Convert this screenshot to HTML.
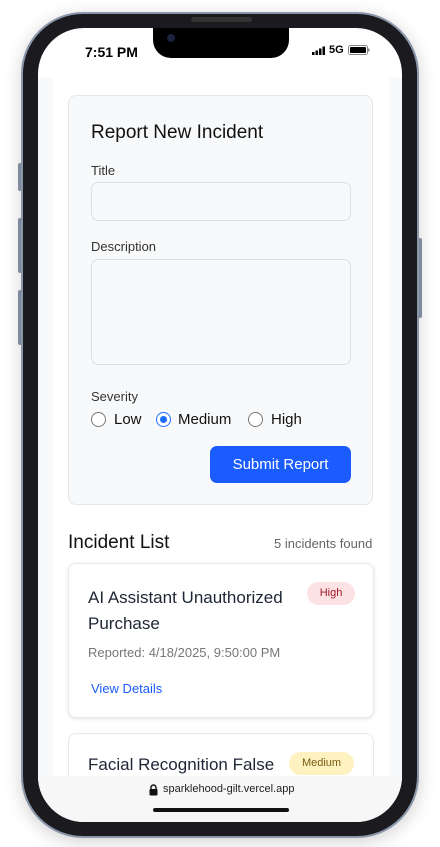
<!DOCTYPE html>
<html><head><style>
*{box-sizing:border-box;margin:0;padding:0}
body{width:440px;height:847px;background:#fff;font-family:"Liberation Sans",sans-serif;position:relative;overflow:hidden}
.frame{position:absolute;left:21px;top:12px;width:398px;height:826px;border-radius:62px;background:#1b1b1f;border:2px solid #8a97ab;box-shadow:0 4px 18px rgba(0,0,0,.18)}
.screen{position:absolute;left:38px;top:28px;width:364px;height:794px;border-radius:46px;background:#fff;overflow:hidden}
.notch{position:absolute;left:153px;top:28px;width:136px;height:30px;background:#000;border-radius:0 0 18px 18px}
.abs{position:absolute}
.t{position:absolute;white-space:nowrap}
</style></head><body>
<div class="abs" style="left:18px;top:163px;width:4px;height:28px;background:#8a97ab;border-radius:2px"></div>
<div class="abs" style="left:18px;top:218px;width:4px;height:55px;background:#8a97ab;border-radius:2px"></div>
<div class="abs" style="left:18px;top:290px;width:4px;height:55px;background:#8a97ab;border-radius:2px"></div>
<div class="abs" style="left:418px;top:238px;width:4px;height:80px;background:#8a97ab;border-radius:2px"></div>
<div class="frame"></div>
<div class="abs" style="left:191px;top:17px;width:61px;height:5px;background:#333;border-radius:3px"></div>
<div class="screen">
  <div class="abs" style="left:0;top:50px;width:364px;height:700px;background:#f8f9fa"></div>
  <div class="abs" style="left:15px;top:50px;width:336px;height:700px;background:#fff"></div>
  <div class="abs" style="left:30px;top:67px;width:305px;height:410px;background:#f8f9fa;border:1px solid #e5e7eb;border-radius:8px"></div>
  <div class="abs" style="left:0;top:748px;width:364px;height:46px;background:#f7f7f7"></div>
</div>
<div class="notch"></div>
<div class="abs" style="left:167px;top:34px;width:8px;height:8px;border-radius:50%;background:#1a2240"></div>
<div class="t" style="left:85px;top:44px;font-size:14px;font-weight:bold;color:#000">7:51 PM</div>
<svg class="abs" style="left:312px;top:46px" width="14" height="10"><rect x="0" y="6" width="2.5" height="3" fill="#000"/><rect x="3.5" y="4.5" width="2.5" height="4.5" fill="#000"/><rect x="7" y="2.5" width="2.5" height="6.5" fill="#000"/><rect x="10.5" y="0.5" width="2.5" height="8.5" fill="#000"/></svg>
<div class="t" style="left:329px;top:44px;font-size:11px;font-weight:bold">5G</div>
<svg class="abs" style="left:348px;top:45px" width="22" height="11"><rect x="0.5" y="0.5" width="19" height="9" rx="2" fill="none" stroke="#888"/><rect x="2" y="2" width="16" height="6" rx="1" fill="#000"/><rect x="20" y="3.5" width="1.5" height="3" fill="#888"/></svg>

<div class="t" style="left:91px;top:122px;font-size:19px;color:#111">Report New Incident</div>
<div class="t" style="left:91px;top:163px;font-size:13px;color:#333">Title</div>
<div class="abs" style="left:91px;top:182px;width:260px;height:39px;background:#f8f9fa;border:1px solid #dcdfe3;border-radius:7px"></div>
<div class="t" style="left:91px;top:239px;font-size:13px;color:#333">Description</div>
<div class="abs" style="left:91px;top:259px;width:260px;height:106px;background:#f8f9fa;border:1px solid #dcdfe3;border-radius:7px"></div>
<div class="t" style="left:91px;top:389px;font-size:13px;color:#333">Severity</div>
<div class="abs" style="left:91px;top:412px;width:15px;height:15px;border:1.5px solid #777;border-radius:50%;background:#fff"></div>
<div class="t" style="left:114px;top:411px;font-size:15px;color:#111">Low</div>
<div class="abs" style="left:156px;top:412px;width:15px;height:15px;border:1.5px solid #1a6cff;border-radius:50%;background:#fff"><div style="margin:2.5px;width:7px;height:7px;border-radius:50%;background:#1a6cff"></div></div>
<div class="t" style="left:178px;top:411px;font-size:15px;color:#111">Medium</div>
<div class="abs" style="left:248px;top:412px;width:15px;height:15px;border:1.5px solid #777;border-radius:50%;background:#fff"></div>
<div class="t" style="left:271px;top:411px;font-size:15px;color:#111">High</div>
<div class="abs" style="left:210px;top:446px;width:141px;height:37px;background:#1a5cff;border-radius:7px;color:#fff;font-size:15px;text-align:center;line-height:37px">Submit Report</div>

<div class="t" style="left:68px;top:532px;font-size:19px;color:#111">Incident List</div>
<div class="t" style="left:274px;top:536px;font-size:13px;color:#666">5 incidents found</div>

<div class="abs" style="left:68px;top:563px;width:306px;height:155px;background:#fff;border:1px solid #e8e8e8;border-radius:8px;box-shadow:0 1px 4px rgba(0,0,0,.1)"></div>
<div class="t" style="left:88px;top:585px;font-size:17px;color:#1e2535;line-height:26px">AI Assistant Unauthorized<br>Purchase</div>
<div class="abs" style="left:307px;top:582px;width:48px;height:23px;background:#fde2e4;border-radius:12px;color:#a0182a;font-size:11px;text-align:center;line-height:23px">High</div>
<div class="t" style="left:88px;top:645px;font-size:13px;color:#777">Reported: 4/18/2025, 9:50:00 PM</div>
<div class="t" style="left:91px;top:681px;font-size:13px;color:#1a5cff">View Details</div>

<div class="abs" style="left:68px;top:733px;width:306px;height:60px;background:#fff;border:1px solid #e8e8e8;border-radius:8px"></div>
<div class="t" style="left:88px;top:755px;font-size:17px;color:#1e2535">Facial Recognition False</div>
<div class="abs" style="left:289px;top:752px;width:65px;height:23px;background:#fef3c0;border-radius:12px;color:#7a5a10;font-size:11px;text-align:center;line-height:23px">Medium</div>

<div class="abs" style="left:38px;top:776px;width:364px;height:46px;background:#f7f7f7;border-radius:0 0 46px 46px"></div>
<svg class="abs" style="left:149px;top:784px" width="9" height="12"><path d="M2 5V3.5a2.5 2.5 0 0 1 5 0V5" fill="none" stroke="#111" stroke-width="1.4"/><rect x="0.5" y="5" width="8" height="6.5" rx="1" fill="#111"/></svg>
<div class="t" style="left:163px;top:783px;font-size:11px;color:#222">sparklehood-gilt.vercel.app</div>
<div class="abs" style="left:153px;top:808px;width:136px;height:4px;background:#111;border-radius:2px"></div>
</body></html>
